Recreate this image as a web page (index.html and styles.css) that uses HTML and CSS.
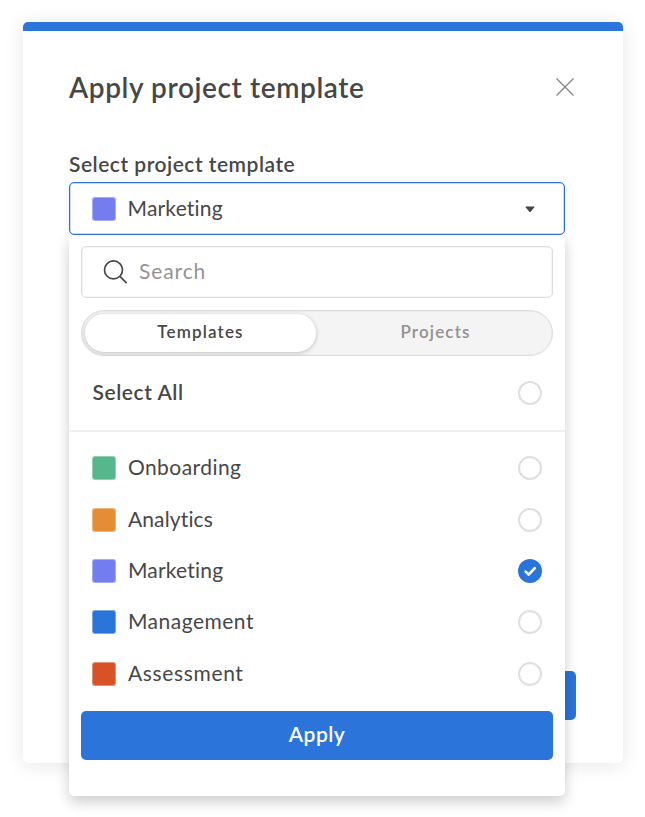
FILE: index.html
```
<!DOCTYPE html>
<html lang="en">
<head>
    <meta charset="UTF-8">
    <meta name="viewport" content="width=device-width, initial-scale=1.0">
    <title>Apply project template</title>
    <link rel="stylesheet" href="styles.css">
</head>
<body>

<div class="modal">
    <div class="modal-header">
        <h2>Apply project template</h2>
        <button type="button" class="close-btn" aria-label="Close">
            <svg width="20" height="20" viewBox="0 0 20 20"><path d="M1.5 1.5 L18.5 18.5 M18.5 1.5 L1.5 18.5"/></svg>
        </button>
    </div>

    <div class="field">
        <div class="field-label">Select project template</div>
        <div class="select">
            <span class="swatch purple"></span>
            <span class="name marketing">Marketing</span>
            <svg class="caret" width="10" height="7" viewBox="0 0 10 7"><path d="M1 0.5 H9 Q9.8 0.6 9.2 1.4 L5.7 5.8 Q5 6.5 4.3 5.8 L0.8 1.4 Q0.2 0.6 1 0.5Z"/></svg>
        </div>

        <div class="dropdown">
            <div class="search">
                <svg width="26" height="26" viewBox="0 0 26 26"><circle cx="10.5" cy="10.9" r="9"/><path d="M17 17.4 L23.6 24.2"/></svg>
                <span>Search</span>
            </div>
            <div class="toggle">
                <div class="tab active"><span>Templates</span></div>
                <div class="tab"><span>Projects</span></div>
            </div>
            <div class="select-all">
                <span class="select-all-text">Select All</span>
                <span class="radio"></span>
            </div>
            <div class="options">
                <div class="option">
                    <span class="swatch green"></span>
                    <span class="name onboarding">Onboarding</span>
                    <span class="radio"></span>
                </div>
                <div class="option">
                    <span class="swatch orange"></span>
                    <span class="name analytics">Analytics</span>
                    <span class="radio"></span>
                </div>
                <div class="option">
                    <span class="swatch purple"></span>
                    <span class="name marketing">Marketing</span>
                    <span class="radio checked">
                        <svg width="24" height="24" viewBox="0 0 24 24"><path d="M7.6 12.6 L10.7 15.6 L16.8 9.2"/></svg>
                    </span>
                </div>
                <div class="option">
                    <span class="swatch blue"></span>
                    <span class="name management">Management</span>
                    <span class="radio"></span>
                </div>
                <div class="option">
                    <span class="swatch red"></span>
                    <span class="name assessment">Assessment</span>
                    <span class="radio"></span>
                </div>
            </div>
            <button type="button" class="apply-btn"><span>Apply</span></button>
        </div>
    </div>

    <div class="modal-footer">
        <button type="button" class="submit-btn" aria-label="Submit"></button>
    </div>
</div>

</body>
</html>
```
FILE: styles.css
```
* {
    box-sizing: border-box;
}
body {
    margin: 0;
    padding: 22px 22px 0 23px;
    height: 817px;
    overflow: hidden;
    background-color: #fff;
    font-family: Lato, "Liberation Sans", sans-serif;
    font-variant-ligatures: none;
    color: #474747;
}
button {
    border: none;
    padding: 0;
    font-family: inherit;
    cursor: pointer;
}
svg {
    display: block;
    fill: none;
}
.modal {
    display: flex;
    flex-direction: column;
    width: 600px;
    height: 741px;
    padding: 0 47px 43px 46px;
    border-top: 9px solid #2b74da;
    border-radius: 5px;
    background-color: #fff;
    box-shadow: 0 2px 20px rgba(0, 0, 0, 0.1);
}
.modal-header {
    display: flex;
    align-items: center;
    justify-content: space-between;
    height: 112px;
    padding-right: 1.5px;
}
.modal-header h2 {
    margin: 0;
    font-size: 28px;
    font-weight: 600;
    letter-spacing: 0.6px;
    line-height: 36px;
}
.close-btn {
    background: none;
}
.close-btn svg {
    stroke: #858585;
    stroke-width: 1.3;
}
.field {
    position: relative;
    width: 495.5px;
    margin-top: 6px;
}
.field-label {
    height: 33px;
    font-size: 21px;
    font-weight: 600;
    letter-spacing: 0.5px;
    line-height: 30px;
}
.select {
    display: flex;
    align-items: center;
    height: 53px;
    padding: 0 29px 0 22px;
    border: 1.5px solid #2f73c9;
    border-radius: 5px;
    background-color: #fff;
    box-shadow: 0 0 8px rgba(0, 0, 0, 0.06), inset 0 0 0 0.5px #8fb5e8;
}
.caret {
    margin-top: 1px;
    fill: #474747;
}
.swatch {
    width: 24px;
    height: 24px;
    margin-right: 11.5px;
    border: 1px solid rgba(255, 255, 255, 0.35);
    border-radius: 3px;
}
.green { background-color: #55b78b; }
.orange { background-color: #e48c36; }
.purple { background-color: #747df0; }
.blue { background-color: #2b74da; }
.red { background-color: #d95127; }
.name {
    flex: 1;
    padding-bottom: 2px;
    font-size: 21px;
    line-height: 28px;
}
.onboarding { letter-spacing: 0.45px; }
.analytics { letter-spacing: 0.15px; }
.marketing { letter-spacing: 0.2px; }
.management { letter-spacing: 0.5px; }
.assessment { letter-spacing: 0.65px; }

/* the open list covers the lower part of the modal */
.dropdown {
    position: absolute;
    top: 86px;
    left: 0;
    width: 496px;
    height: 561px;
    padding: 11px 12px 0;
    border-radius: 0 4px 5px 5px;
    background-color: #fff;
    box-shadow: 0 6px 14px rgba(0, 0, 0, 0.2);
    clip-path: inset(0 -30px -40px -30px);
}
.search {
    display: flex;
    align-items: center;
    height: 52px;
    padding-left: 21px;
    border: 1.5px solid #dedede;
    border-radius: 5px;
    box-shadow: inset 0 0 0 0.5px #ededed;
    color: #949494;
    font-size: 21px;
    letter-spacing: 0.9px;
}
.search span {
    padding-bottom: 3px;
}
.search svg {
    margin-right: 10px;
    stroke: #474747;
    stroke-width: 1.7;
}
.toggle {
    display: flex;
    height: 46px;
    margin-top: 12px;
    padding: 3px;
    border: 1.5px solid #dedede;
    border-radius: 23px;
    box-shadow: inset 0 0 0 0.5px #e4e4e4;
    background-color: #f4f4f4;
}
.tab {
    flex: 1;
    padding-left: 6px;
    border-radius: 19px;
    color: #919191;
    font-size: 17px;
    font-weight: 600;
    letter-spacing: 1.15px;
    line-height: 36px;
    text-align: center;
}
.tab.active {
    flex: none;
    width: 231px;
    padding-left: 0;
    background-color: #fff;
    box-shadow: 0 1px 4px rgba(0, 0, 0, 0.22);
    color: #474747;
}
.select-all {
    display: flex;
    align-items: center;
    justify-content: space-between;
    height: 76px;
    margin: 0 -12px;
    padding: 0 23.5px 0 23.5px;
    border-bottom: 2px solid #efefef;
    font-size: 21px;
    font-weight: 600;
    letter-spacing: 0.55px;
}
.select-all-text {
    padding-bottom: 3px;
}
.radio {
    width: 24px;
    height: 24px;
    border: 2px solid #dfdfdf;
    border-radius: 50%;
    background-color: #fff;
}
.radio.checked {
    border: none;
    background-color: #2b74da;
}
.radio svg {
    stroke: #fff;
    stroke-width: 2.6;
    stroke-linecap: round;
    stroke-linejoin: round;
}
.options {
    padding-top: 10.5px;
}
.option {
    display: flex;
    align-items: center;
    height: 51.4px;
    padding: 0 11.5px 0 11.4px;
}
.apply-btn {
    width: 100%;
    height: 49px;
    margin-top: 11.5px;
    border-radius: 5px;
    background-color: #2b74da;
    color: #fff;
    font-size: 21px;
    font-weight: 600;
    letter-spacing: 0.5px;
}
.apply-btn span {
    display: block;
    padding-bottom: 3px;
}
.modal-footer {
    display: flex;
    justify-content: flex-end;
    margin-top: auto;
}
.submit-btn {
    width: 120px;
    height: 49px;
    border-radius: 5px;
    background-color: #2b74da;
}
```
